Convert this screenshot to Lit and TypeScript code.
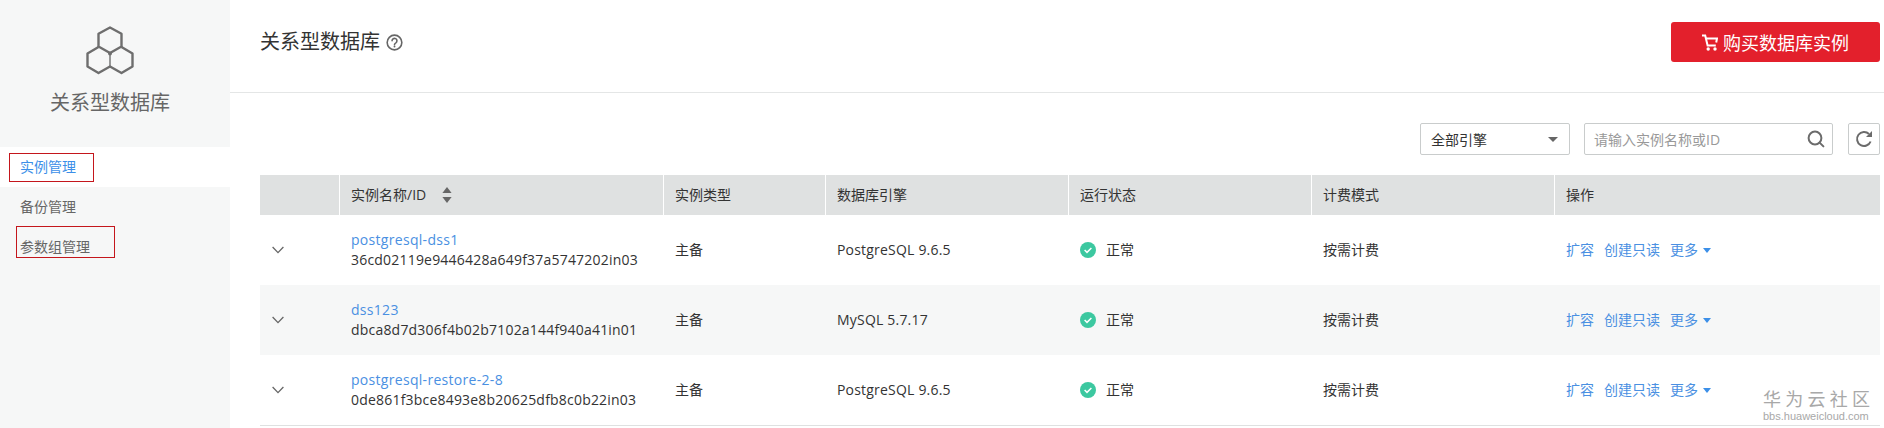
import { LitElement, html, css, svg } from "lit";
import { customElement } from "lit/decorators.js";

const rows = [
  { name: "postgresql-dss1", id: "36cd02119e9446428a649f37a5747202in03", engine: "PostgreSQL 9.6.5" },
  { name: "dss123", id: "dbca8d7d306f4b02b7102a144f940a41in01", engine: "MySQL 5.7.17" },
  { name: "postgresql-restore-2-8", id: "0de861f3bce8493e8b20625dfb8c0b22in03", engine: "PostgreSQL 9.6.5" },
];

@customElement("app-root")
export class AppRoot extends LitElement {
  static styles = css`
    :host {
      display: flex;
      width: 1884px;
      height: 428px;
      overflow: hidden;
      position: relative;
      background: #fff;
      color: #333;
      font-family: "Open Sans", "Noto Sans CJK SC", sans-serif;
      font-size: 14px;
    }
    .side {
      width: 230px;
      flex: none;
      background: #f6f7f7;
      display: flex;
      flex-direction: column;
    }
    .brand {
      height: 147px;
      display: flex;
      flex-direction: column;
      align-items: center;
      padding: 26px 10px 0 0;
      box-sizing: border-box;
    }
    .brand svg { display: block; }
    .brand-name {
      font-size: 20px;
      line-height: 28px;
      margin-top: 13px;
      color: #666;
    }
    .nav { display: flex; flex-direction: column; }
    .nav-item {
      height: 40px;
      line-height: 40px;
      padding-left: 20px;
      color: #666;
    }
    .nav-item.active { background: #fff; color: #3c8fe8; }
    .mark {
      position: absolute;
      border: 1px solid #c4161c;
      box-sizing: border-box;
    }
    .m1 { left: 9px; top: 153px; width: 85px; height: 29px; }
    .m2 { left: 16px; top: 226px; width: 99px; height: 32px; }
    .main { flex: 1; min-width: 0; display: flex; flex-direction: column; }
    .head {
      height: 93px;
      box-sizing: border-box;
      border-bottom: 1px solid #e4e6e6;
      padding: 22px 4px 0 30px;
      display: flex;
      justify-content: space-between;
      align-items: flex-start;
    }
    .title {
      display: flex;
      align-items: center;
      gap: 6px;
      font-size: 20px;
      line-height: 40px;
      height: 40px;
      color: #333;
    }
    .buy {
      width: 209px;
      height: 40px;
      background: #e3202c;
      border-radius: 3px;
      color: #fff;
      font-size: 18px;
      display: flex;
      align-items: center;
      justify-content: center;
      gap: 5px;
    }
    .tools {
      display: flex;
      justify-content: flex-end;
      gap: 14px;
      padding: 30px 4px 20px 30px;
    }
    .box {
      height: 32px;
      box-sizing: border-box;
      border: 1px solid #c9cccc;
      border-radius: 2px;
      background: #fff;
      display: flex;
      align-items: center;
    }
    .select { width: 150px; justify-content: space-between; padding: 0 11px 0 10px; color: #333; }
    .caret { width: 0; height: 0; border-left: 5px solid transparent; border-right: 5px solid transparent; border-top: 5px solid #666; }
    .search { width: 249px; justify-content: space-between; padding: 0 7px 0 9px; color: #999; }
    .refresh { width: 32px; justify-content: center; margin-left: 1px; }
    .table { margin: 0 4px 0 30px; }
    .tr {
      display: grid;
      grid-template-columns: 80px 324px 162px 243px 243px 243px 325px;
      align-items: center;
    }
    .thead { height: 40px; background: #dfe1e1; }
    .th {
      height: 40px;
      line-height: 40px;
      padding-left: 11px;
      box-sizing: border-box;
      border-right: 1px solid #fff;
      display: flex;
      align-items: center;
      gap: 16px;
      color: #333;
    }
    .th:last-child { border-right: none; }
    .row { height: 70px; }
    .row.alt { background: #f6f7f7; }
    .td { padding-left: 11px; line-height: 20px; }
    .td.exp { padding-left: 12px; display: flex; }
    .link { color: #4a90e2; letter-spacing: 0.3px; }
    .inst { letter-spacing: 0.2px; white-space: nowrap; }
    .engine { letter-spacing: 0.2px; }
    .state { display: flex; align-items: center; gap: 10px; }
    .ops { display: flex; align-items: center; gap: 10px; color: #4a90e2; }
    .more { display: flex; align-items: center; gap: 5px; }
    .more i { width: 0; height: 0; border-left: 4px solid transparent; border-right: 4px solid transparent; border-top: 5px solid #3c8fe8; }
    .foot { margin: 0 4px 0 30px; border-top: 1px solid #dfe1e1; }
    .wm {
      position: absolute;
      left: 1763px;
      top: 386px;
      width: 107px;
      color: #a8a8a8;
      font-family: "Noto Sans CJK SC", sans-serif;
    }
    .wm-cn { font-size: 18px; line-height: 24px; display: flex; justify-content: space-between; }
    .wm-en { font-family: "Liberation Sans", sans-serif; font-size: 11px; line-height: 12px; white-space: nowrap; }
  `;

  logo() {
    return html`<svg width="48" height="50" viewBox="86 27 48 50" fill="none" stroke="#6e6e6e" stroke-width="2.4" stroke-linejoin="round">
      ${svg`<path d="M110 28.5l11.5 6.2v12.8L110 54l-11.5-6.5V34.7z"/>
      <path d="M98.5 48L87.5 54.5v13L98.5 74 110 67.5l11.5 6.5 11-6.5v-13L121.5 48"/>
      <path d="M110 54v13.5" stroke-width="1.4"/>
      <circle cx="110" cy="54.5" r="2" fill="#6e6e6e" stroke="none"/>`}
    </svg>`;
  }

  help() {
    return html`<svg width="17" height="17" viewBox="0 0 16 16" fill="none" stroke="#666" stroke-width="1.5">
      <circle cx="8" cy="8" r="6.9"/>
      <path d="M5.7 6.4a2.3 2.3 0 1 1 3.6 1.9c-.8.5-1.3 1-1.3 1.8" stroke-linecap="round"/>
      <circle cx="8" cy="11.8" r=".9" fill="#666" stroke="none"/>
    </svg>`;
  }

  cart() {
    return html`<svg width="16" height="17" viewBox="0 0 16 17" fill="none" stroke="#fff" stroke-width="2">
      <path d="M0 1.5h3.2l2.4 10h8.2"/>
      <path d="M4 4.5h11l-.8 4"/>
      <circle cx="6.2" cy="15" r="1.7" fill="#fff" stroke="none"/>
      <circle cx="13" cy="15" r="1.7" fill="#fff" stroke="none"/>
    </svg>`;
  }

  magnifier() {
    return html`<svg width="18" height="18" viewBox="0 0 18 18" fill="none" stroke="#6b6b6b" stroke-width="2">
      <circle cx="8" cy="8" r="6.4"/>
      <path d="M12.6 12.6L16.4 16.4" stroke-linecap="round"/>
    </svg>`;
  }

  refresh() {
    return html`<svg width="18" height="18" viewBox="0 0 18 18" fill="none" stroke="#6b6b6b" stroke-width="2">
      <path d="M15.6 11.5A7 7 0 1 1 14 4"/>
      <path d="M17 1v6h-6z" fill="#6b6b6b" stroke="none"/>
    </svg>`;
  }

  sort() {
    return html`<svg width="10" height="16" viewBox="0 0 10 16" fill="#666">
      <path d="M5 0l4.6 6H.4z"/><path d="M5 16L.4 10h9.2z"/>
    </svg>`;
  }

  chevron() {
    return html`<svg width="12" height="8" viewBox="0 0 12 8" fill="none" stroke="#666" stroke-width="1.3">
      <path d="M.6 1l5.4 5.6L11.4 1"/>
    </svg>`;
  }

  check() {
    return html`<svg width="16" height="16" viewBox="0 0 16 16">
      <circle cx="8" cy="8" r="8" fill="#3cc8a0"/>
      <path d="M4.6 8l2.4 2.4 4.4-4.4" fill="none" stroke="#fff" stroke-width="1.5"/>
    </svg>`;
  }

  render() {
    return html`
      <aside class="side">
        <div class="brand">
          ${this.logo()}
          <div class="brand-name">关系型数据库</div>
        </div>
        <nav class="nav">
          <div class="nav-item active">实例管理</div>
          <div class="nav-item">备份管理</div>
          <div class="nav-item">参数组管理</div>
        </nav>
      </aside>
      <main class="main">
        <header class="head">
          <div class="title">关系型数据库 ${this.help()}</div>
          <div class="buy">${this.cart()}<span>购买数据库实例</span></div>
        </header>
        <div class="tools">
          <div class="box select"><span>全部引擎</span><span class="caret"></span></div>
          <div class="box search"><span>请输入实例名称或ID</span>${this.magnifier()}</div>
          <div class="box refresh">${this.refresh()}</div>
        </div>
        <div class="table">
          <div class="tr thead">
            <div class="th"></div>
            <div class="th"><span>实例名称/ID</span>${this.sort()}</div>
            <div class="th">实例类型</div>
            <div class="th">数据库引擎</div>
            <div class="th">运行状态</div>
            <div class="th">计费模式</div>
            <div class="th">操作</div>
          </div>
          ${rows.map(
            (r, i) => html`<div class="tr row ${i === 1 ? "alt" : ""}">
              <div class="td exp">${this.chevron()}</div>
              <div class="td"><div class="link">${r.name}</div><div class="inst">${r.id}</div></div>
              <div class="td">主备</div>
              <div class="td engine">${r.engine}</div>
              <div class="td state">${this.check()}<span>正常</span></div>
              <div class="td">按需计费</div>
              <div class="td ops"><span>扩容</span><span>创建只读</span><span class="more">更多<i></i></span></div>
            </div>`
          )}
        </div>
        <div class="foot"></div>
      </main>
      <div class="mark m1"></div>
      <div class="mark m2"></div>
      <div class="wm">
        <div class="wm-cn"><span>华</span><span>为</span><span>云</span><span>社</span><span>区</span></div>
        <div class="wm-en">bbs.huaweicloud.com</div>
      </div>
    `;
  }
}
